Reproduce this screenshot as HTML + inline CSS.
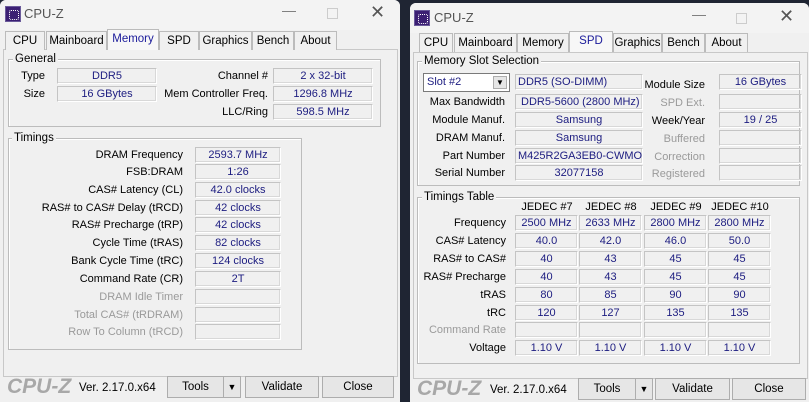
<!DOCTYPE html>
<html><head><meta charset="utf-8"><style>
*{margin:0;padding:0;box-sizing:border-box}
body{width:809px;height:402px;background:#1f2533;position:relative;overflow:hidden;font-family:"Liberation Sans",sans-serif;font-size:11px;color:#000}
.w{position:absolute;background:#f0f0f0;border-radius:6px 6px 0 0;overflow:hidden}
.tb{position:absolute;left:0;top:0;right:0;height:30px;background:#f3f3f3}
.ic{position:absolute;width:16px;height:16px;background:#3b1f73;border:1px solid #6a5a9a}
.ic:after{content:"";position:absolute;left:3px;top:3px;width:8px;height:8px;border:1px dotted #fff;border-radius:2px}
.tt{position:absolute;font-size:13px;color:#555}
.a{position:absolute;white-space:nowrap}
.tab{position:absolute;height:19px;border:1px solid #bbb;border-bottom:none;line-height:18px;text-align:center;background:#f0f0f0;font-size:11.5px}
.tab.s{background:#f7f7f7;color:#1a1a9a;height:21px}
.pn{position:absolute;border:1px solid #c8c8c8;background:#f0f0f0}
.g{position:absolute;border:1px solid #bcbcbc;box-shadow:inset 1px 1px 0 #fff}
.lg{position:absolute;background:#f0f0f0;padding:0 2px;line-height:12px;font-size:11.5px}
.l{position:absolute;text-align:right;white-space:nowrap;line-height:15px}
.d{color:#9a9a9a}
.b{position:absolute;height:16px;border:1px solid #c4c4c4;border-right-color:#fff;border-bottom-color:#fff;box-shadow:inset -1px -1px 0 #d8d8d8;color:#1c1c80;text-align:center;line-height:14px;white-space:nowrap;overflow:hidden}
.bt{position:absolute;height:22px;border:1px solid #adadad;background:#e6e6e6;text-align:center;line-height:20px;font-size:11.5px}
.logo{position:absolute;font-size:21px;font-weight:bold;font-style:italic;color:#a8a8a8}
</style></head><body>

<div class="w" style="left:0;top:0;width:400px;height:402px">
<div class="tb"></div>
<div class="ic" style="left:5px;top:6px"></div>
<div class="tt" style="left:24px;top:6px">CPU-Z</div>
<div class="a" style="left:282px;top:2px;color:#777;font-size:14px">—</div>
<div class="a" style="left:327px;top:8px;width:11px;height:11px;border:1px solid #ccc"></div>
<div class="a" style="left:370px;top:2px;color:#555;font-size:18px">✕</div>
<div class="pn" style="left:3px;top:49px;width:395px;height:328px"></div>
<div class="tab" style="left:5px;top:31px;width:40px">CPU</div>
<div class="tab" style="left:46px;top:31px;width:61px">Mainboard</div>
<div class="tab s" style="left:107px;top:29px;width:52px">Memory</div>
<div class="tab" style="left:159px;top:31px;width:40px">SPD</div>
<div class="tab" style="left:199px;top:31px;width:53px">Graphics</div>
<div class="tab" style="left:252px;top:31px;width:42px">Bench</div>
<div class="tab" style="left:294px;top:31px;width:43px">About</div>

<div class="g" style="left:8px;top:59px;width:373px;height:68px"></div>
<div class="lg" style="left:13px;top:53px">General</div>
<div class="l" style="left:0;width:45px;top:69px">Type</div><div class="b" style="left:57px;top:68px;width:100px">DDR5</div>
<div class="l" style="left:0;width:45px;top:87px">Size</div><div class="b" style="left:57px;top:86px;width:100px">16 GBytes</div>
<div class="l" style="left:150px;width:118px;top:69px">Channel #</div><div class="b" style="left:273px;top:68px;width:100px">2 x 32-bit</div>
<div class="l" style="left:150px;width:118px;top:87px">Mem Controller Freq.</div><div class="b" style="left:273px;top:86px;width:100px">1296.8 MHz</div>
<div class="l" style="left:150px;width:118px;top:105px">LLC/Ring</div><div class="b" style="left:273px;top:104px;width:100px">598.5 MHz</div>

<div class="g" style="left:8px;top:138px;width:294px;height:212px"></div>
<div class="lg" style="left:12px;top:132px">Timings</div>
<div class="l" style="left:0;width:183px;top:148px">DRAM Frequency</div><div class="b" style="left:195px;top:147px;width:86px">2593.7 MHz</div>
<div class="l" style="left:0;width:183px;top:165px">FSB:DRAM</div><div class="b" style="left:195px;top:164px;width:86px">1:26</div>
<div class="l" style="left:0;width:183px;top:183px">CAS# Latency (CL)</div><div class="b" style="left:195px;top:182px;width:86px">42.0 clocks</div>
<div class="l" style="left:0;width:183px;top:201px">RAS# to CAS# Delay (tRCD)</div><div class="b" style="left:195px;top:200px;width:86px">42 clocks</div>
<div class="l" style="left:0;width:183px;top:218px">RAS# Precharge (tRP)</div><div class="b" style="left:195px;top:217px;width:86px">42 clocks</div>
<div class="l" style="left:0;width:183px;top:236px">Cycle Time (tRAS)</div><div class="b" style="left:195px;top:235px;width:86px">82 clocks</div>
<div class="l" style="left:0;width:183px;top:254px">Bank Cycle Time (tRC)</div><div class="b" style="left:195px;top:253px;width:86px">124 clocks</div>
<div class="l" style="left:0;width:183px;top:272px">Command Rate (CR)</div><div class="b" style="left:195px;top:271px;width:86px">2T</div>
<div class="l d" style="left:0;width:183px;top:290px">DRAM Idle Timer</div><div class="b" style="left:195px;top:289px;width:86px"></div>
<div class="l d" style="left:0;width:183px;top:308px">Total CAS# (tRDRAM)</div><div class="b" style="left:195px;top:307px;width:86px"></div>
<div class="l d" style="left:0;width:183px;top:325px">Row To Column (tRCD)</div><div class="b" style="left:195px;top:324px;width:86px"></div>

<div class="logo" style="left:7px;top:375px">CPU-Z</div>
<div class="a" style="left:79px;top:382px;font-size:11.5px">Ver. 2.17.0.x64</div>
<div class="bt" style="left:167px;top:376px;width:57px">Tools</div>
<div class="bt" style="left:223px;top:376px;width:18px;font-size:9px">▼</div>
<div class="bt" style="left:245px;top:376px;width:74px">Validate</div>
<div class="bt" style="left:322px;top:376px;width:72px">Close</div>
</div>

<div class="w" style="left:410px;top:3px;width:399px;height:399px">
<div class="tb"></div>
<div class="ic" style="left:4px;top:7px"></div>
<div class="tt" style="left:24px;top:7px">CPU-Z</div>
<div class="a" style="left:282px;top:3px;color:#777;font-size:14px">—</div>
<div class="a" style="left:326px;top:10px;width:11px;height:11px;border:1px solid #ccc"></div>
<div class="a" style="left:369px;top:3px;color:#555;font-size:18px">✕</div>
<div class="pn" style="left:3px;top:49px;width:395px;height:327px"></div>
<div class="tab" style="left:9px;top:30px;width:34px">CPU</div>
<div class="tab" style="left:44px;top:30px;width:63px">Mainboard</div>
<div class="tab" style="left:107px;top:30px;width:52px">Memory</div>
<div class="tab s" style="left:159px;top:28px;width:44px">SPD</div>
<div class="tab" style="left:203px;top:30px;width:49px">Graphics</div>
<div class="tab" style="left:252px;top:30px;width:43px">Bench</div>
<div class="tab" style="left:295px;top:30px;width:43px">About</div>

<div class="g" style="left:7px;top:58px;width:383px;height:125px"></div>
<div class="lg" style="left:12px;top:52px">Memory Slot Selection</div>
<div class="a" style="left:13px;top:70px;width:87px;height:19px;border:1px solid #7a7a7a;background:#fff;line-height:17px;padding-left:3px;color:#1c1c80">Slot #2<span style="position:absolute;right:2px;top:2px;width:14px;height:13px;background:#e6e6e6;border:1px solid #adadad;font-size:8px;text-align:center;line-height:11px;color:#000">▼</span></div>
<div class="b" style="left:105px;top:71px;width:128px;text-align:left;padding-left:2px">DDR5 (SO-DIMM)</div>
<div class="l" style="left:230px;width:65px;top:75px">Module Size</div><div class="b" style="left:309px;top:71px;width:83px">16 GBytes</div>
<div class="l" style="left:0;width:95px;top:92px">Max Bandwidth</div><div class="b" style="left:105px;top:91px;width:128px;text-align:left;padding-left:5px">DDR5-5600 (2800 MHz)</div>
<div class="l d" style="left:230px;width:65px;top:93px">SPD Ext.</div><div class="b" style="left:309px;top:91px;width:83px"></div>
<div class="l" style="left:0;width:95px;top:110px">Module Manuf.</div><div class="b" style="left:105px;top:109px;width:128px">Samsung</div>
<div class="l" style="left:230px;width:65px;top:111px">Week/Year</div><div class="b" style="left:309px;top:109px;width:83px">19 / 25</div>
<div class="l" style="left:0;width:95px;top:128px">DRAM Manuf.</div><div class="b" style="left:105px;top:127px;width:128px">Samsung</div>
<div class="l d" style="left:230px;width:65px;top:129px">Buffered</div><div class="b" style="left:309px;top:127px;width:83px"></div>
<div class="l" style="left:0;width:95px;top:146px">Part Number</div><div class="b" style="left:105px;top:145px;width:128px;text-align:left;padding-left:2px">M425R2GA3EB0-CWMOL</div>
<div class="l d" style="left:230px;width:65px;top:147px">Correction</div><div class="b" style="left:309px;top:145px;width:83px"></div>
<div class="l" style="left:0;width:95px;top:163px">Serial Number</div><div class="b" style="left:105px;top:162px;width:128px">32077158</div>
<div class="l d" style="left:230px;width:65px;top:164px">Registered</div><div class="b" style="left:309px;top:162px;width:83px"></div>

<div class="g" style="left:7px;top:194px;width:383px;height:167px"></div>
<div class="lg" style="left:12px;top:188px">Timings Table</div>
<div class="a" style="left:105px;top:198px;width:64px;text-align:center">JEDEC #7</div>
<div class="a" style="left:169px;top:198px;width:64px;text-align:center">JEDEC #8</div>
<div class="a" style="left:234px;top:198px;width:64px;text-align:center">JEDEC #9</div>
<div class="a" style="left:298px;top:198px;width:64px;text-align:center">JEDEC #10</div>

<div class="l" style="left:0;width:96px;top:213px">Frequency</div>
<div class="b" style="left:105px;top:212px;width:63px">2500 MHz</div><div class="b" style="left:169px;top:212px;width:63px">2633 MHz</div><div class="b" style="left:234px;top:212px;width:63px">2800 MHz</div><div class="b" style="left:298px;top:212px;width:63px">2800 MHz</div>
<div class="l" style="left:0;width:96px;top:231px">CAS# Latency</div>
<div class="b" style="left:105px;top:230px;width:63px">40.0</div><div class="b" style="left:169px;top:230px;width:63px">42.0</div><div class="b" style="left:234px;top:230px;width:63px">46.0</div><div class="b" style="left:298px;top:230px;width:63px">50.0</div>
<div class="l" style="left:0;width:96px;top:249px">RAS# to CAS#</div>
<div class="b" style="left:105px;top:248px;width:63px">40</div><div class="b" style="left:169px;top:248px;width:63px">43</div><div class="b" style="left:234px;top:248px;width:63px">45</div><div class="b" style="left:298px;top:248px;width:63px">45</div>
<div class="l" style="left:0;width:96px;top:267px">RAS# Precharge</div>
<div class="b" style="left:105px;top:266px;width:63px">40</div><div class="b" style="left:169px;top:266px;width:63px">43</div><div class="b" style="left:234px;top:266px;width:63px">45</div><div class="b" style="left:298px;top:266px;width:63px">45</div>
<div class="l" style="left:0;width:96px;top:285px">tRAS</div>
<div class="b" style="left:105px;top:284px;width:63px">80</div><div class="b" style="left:169px;top:284px;width:63px">85</div><div class="b" style="left:234px;top:284px;width:63px">90</div><div class="b" style="left:298px;top:284px;width:63px">90</div>
<div class="l" style="left:0;width:96px;top:303px">tRC</div>
<div class="b" style="left:105px;top:302px;width:63px">120</div><div class="b" style="left:169px;top:302px;width:63px">127</div><div class="b" style="left:234px;top:302px;width:63px">135</div><div class="b" style="left:298px;top:302px;width:63px">135</div>
<div class="l d" style="left:0;width:96px;top:320px">Command Rate</div>
<div class="b" style="left:105px;top:319px;width:63px"></div><div class="b" style="left:169px;top:319px;width:63px"></div><div class="b" style="left:234px;top:319px;width:63px"></div><div class="b" style="left:298px;top:319px;width:63px"></div>
<div class="l" style="left:0;width:96px;top:338px">Voltage</div>
<div class="b" style="left:105px;top:337px;width:63px">1.10 V</div><div class="b" style="left:169px;top:337px;width:63px">1.10 V</div><div class="b" style="left:234px;top:337px;width:63px">1.10 V</div><div class="b" style="left:298px;top:337px;width:63px">1.10 V</div>

<div class="logo" style="left:7px;top:374px">CPU-Z</div>
<div class="a" style="left:80px;top:381px;font-size:11.5px">Ver. 2.17.0.x64</div>
<div class="bt" style="left:168px;top:375px;width:58px">Tools</div>
<div class="bt" style="left:225px;top:375px;width:18px;font-size:9px">▼</div>
<div class="bt" style="left:245px;top:375px;width:75px">Validate</div>
<div class="bt" style="left:322px;top:375px;width:74px">Close</div>
</div>
</body></html>
